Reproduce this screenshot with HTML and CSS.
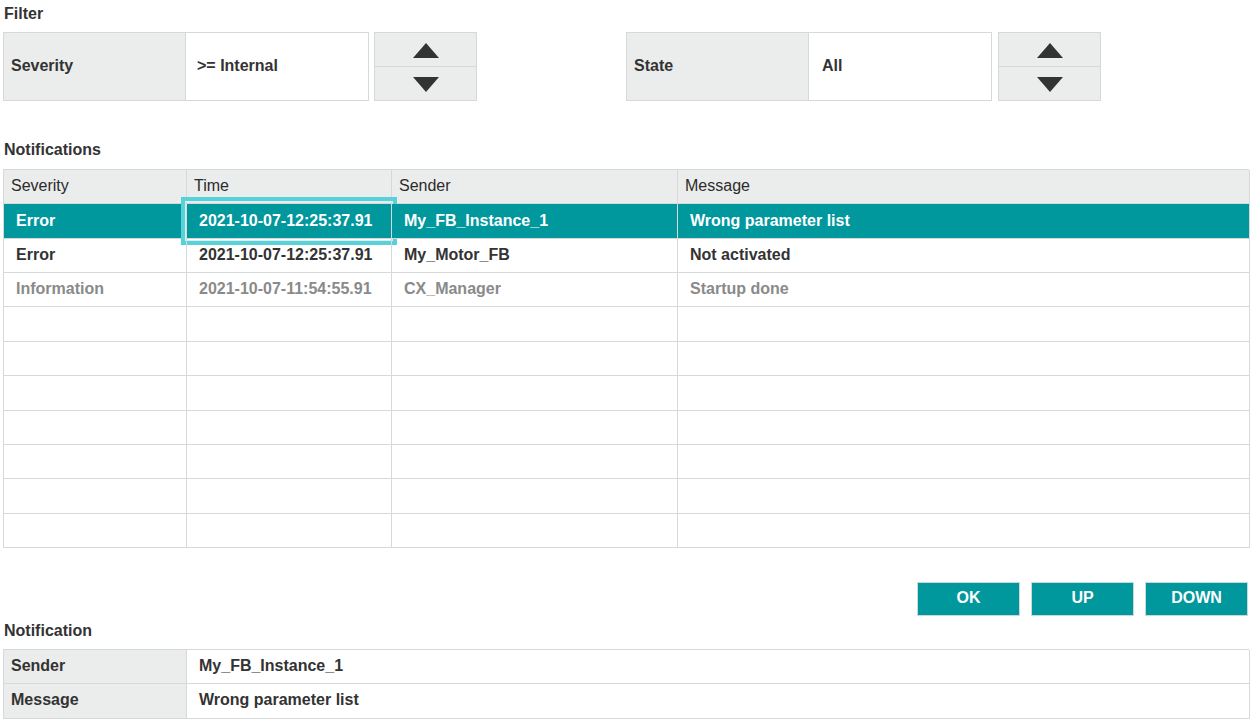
FILE: index.html
```html
<!DOCTYPE html>
<html>
<head>
<meta charset="utf-8">
<link rel="stylesheet" href="styles.css">
</head>
<body>
<div class="page">
  <div class="section-label first">Filter</div>
  <div class="filter-row">
    <div class="filter-group">
      <div class="field">
        <div class="field-label">Severity</div>
        <div class="field-value">&gt;= Internal</div>
      </div>
      <div class="spin">
        <div class="spin-btn"><span class="tri up"></span></div>
        <div class="spin-btn"><span class="tri down"></span></div>
      </div>
    </div>
    <div class="filter-group second">
      <div class="field">
        <div class="field-label">State</div>
        <div class="field-value state">All</div>
      </div>
      <div class="spin">
        <div class="spin-btn"><span class="tri up"></span></div>
        <div class="spin-btn"><span class="tri down"></span></div>
      </div>
    </div>
  </div>

  <div class="section-label notif">Notifications</div>
  <div class="grid">
    <div class="cell head">Severity</div>
    <div class="cell head">Time</div>
    <div class="cell head">Sender</div>
    <div class="cell head">Message</div>

    <div class="cell sel">Error</div>
    <div class="cell sel focus">2021-10-07-12:25:37.91</div>
    <div class="cell sel">My_FB_Instance_1</div>
    <div class="cell sel">Wrong parameter list</div>

    <div class="cell">Error</div>
    <div class="cell">2021-10-07-12:25:37.91</div>
    <div class="cell">My_Motor_FB</div>
    <div class="cell">Not activated</div>

    <div class="cell info">Information</div>
    <div class="cell info">2021-10-07-11:54:55.91</div>
    <div class="cell info">CX_Manager</div>
    <div class="cell info">Startup done</div>

    <div class="cell"></div><div class="cell"></div><div class="cell"></div><div class="cell"></div>
    <div class="cell"></div><div class="cell"></div><div class="cell"></div><div class="cell"></div>
    <div class="cell"></div><div class="cell"></div><div class="cell"></div><div class="cell"></div>
    <div class="cell"></div><div class="cell"></div><div class="cell"></div><div class="cell"></div>
    <div class="cell"></div><div class="cell"></div><div class="cell"></div><div class="cell"></div>
    <div class="cell"></div><div class="cell"></div><div class="cell"></div><div class="cell"></div>
    <div class="cell"></div><div class="cell"></div><div class="cell"></div><div class="cell"></div>
  </div>

  <div class="buttons">
    <div class="btn">OK</div>
    <div class="btn">UP</div>
    <div class="btn">DOWN</div>
  </div>

  <div class="section-label detail-label">Notification</div>
  <div class="detail">
    <div class="d-label">Sender</div>
    <div class="d-value">My_FB_Instance_1</div>
    <div class="d-label">Message</div>
    <div class="d-value">Wrong parameter list</div>
  </div>
</div>
</body>
</html>
```

FILE: styles.css
```css
html, body {
  margin: 0;
  padding: 0;
  background: #ffffff;
}
body {
  font-family: "Liberation Sans", Arial, sans-serif;
  color: #333333;
  width: 1252px;
  height: 722px;
  overflow: hidden;
}
.page {
  padding: 0 3px;
}
.section-label {
  font-size: 16px;
  font-weight: bold;
  height: 20px;
  line-height: 20px;
  padding-left: 1px;
  color: #333;
}
.section-label.first {
  margin-top: 4px;
  margin-bottom: 8px;
}
.section-label.notif {
  margin-top: 39px;
  margin-bottom: 9px;
}
.section-label.detail-label {
  margin-top: 5px;
  margin-bottom: 8px;
}

/* Filter */
.filter-row {
  display: flex;
  height: 69px;
}
.filter-group {
  display: flex;
  gap: 5px;
}
.filter-group.second {
  margin-left: 149px;
  gap: 6px;
}
.field {
  display: flex;
  border: 1px solid #d6d9d8;
  box-sizing: border-box;
  width: 366px;
  height: 69px;
}
.field-label {
  width: 182px;
  background: #ebecec;
  border-right: 1px solid #d6d9d8;
  display: flex;
  align-items: center;
  padding-left: 7px;
  padding-bottom: 2px;
  box-sizing: border-box;
  font-size: 16px;
  font-weight: bold;
}
.field-value {
  flex: 1;
  display: flex;
  align-items: center;
  padding-left: 11px;
  padding-bottom: 2px;
  font-size: 16px;
  font-weight: bold;
}
.field-value.state {
  padding-left: 13px;
}
.spin {
  width: 103px;
  height: 69px;
  box-sizing: border-box;
  border: 1px solid #d6d9d8;
  background: #ebecec;
  display: flex;
  flex-direction: column;
}
.spin-btn {
  flex: 1;
  display: flex;
  align-items: center;
  justify-content: center;
}
.spin-btn + .spin-btn {
  border-top: 1px solid #d6d9d8;
}
.tri {
  width: 0;
  height: 0;
  border-left: 13px solid transparent;
  border-right: 13px solid transparent;
}
.tri.up {
  border-bottom: 15px solid #333;
  margin-top: 2px;
}
.tri.down {
  border-top: 15px solid #333;
  margin-top: 2px;
}

/* Notifications grid */
.grid {
  display: grid;
  grid-template-columns: 183px 205px 286px 572px;
  grid-auto-rows: 34.36px;
  width: 1246px;
  border-top: 1px solid #d6d9d8;
  border-left: 1px solid #d6d9d8;
  box-sizing: border-box;
}
.cell {
  border-right: 1px solid #d6d9d8;
  border-bottom: 1px solid #d6d9d8;
  display: flex;
  align-items: center;
  padding-left: 12px;
  padding-bottom: 1px;
  font-size: 16px;
  font-weight: bold;
  color: #333;
  white-space: nowrap;
  position: relative;
}
.cell.head {
  background: #ebecec;
  font-weight: normal;
  color: #2b2b2b;
  padding-left: 7px;
}
.cell.sel {
  background: #00979d;
  color: #ffffff;
}
.cell.info {
  color: #8a8a8a;
}
.cell.focus::after {
  content: "";
  position: absolute;
  left: -6px;
  top: -7px;
  right: -6px;
  bottom: -7px;
  border: 4px solid #58d2d9;
  box-shadow: inset 0 0 0 1px #d9eef0;
  pointer-events: none;
}

/* Buttons */
.buttons {
  display: flex;
  justify-content: flex-end;
  gap: 11px;
  margin-top: 34px;
  padding-right: 1px;
}
.btn {
  width: 103px;
  height: 34px;
  box-sizing: border-box;
  background: #00979d;
  border: 1px solid #c9d9da;
  color: #fff;
  font-size: 16px;
  font-weight: bold;
  display: flex;
  align-items: center;
  justify-content: center;
  padding-bottom: 2px;
}

/* Detail */
.detail {
  display: grid;
  grid-template-columns: 183px 1063px;
  grid-template-rows: 34px 35px;
  width: 1246px;
  border-top: 1px solid #d6d9d8;
  border-left: 1px solid #d6d9d8;
  box-sizing: border-box;
}
.d-label, .d-value {
  border-right: 1px solid #d6d9d8;
  border-bottom: 1px solid #d6d9d8;
  display: flex;
  align-items: center;
  font-size: 16px;
  font-weight: bold;
  color: #333;
  padding-bottom: 1px;
}
.d-label {
  background: #ebecec;
  padding-left: 7px;
}
.d-value {
  padding-left: 12px;
}
```
